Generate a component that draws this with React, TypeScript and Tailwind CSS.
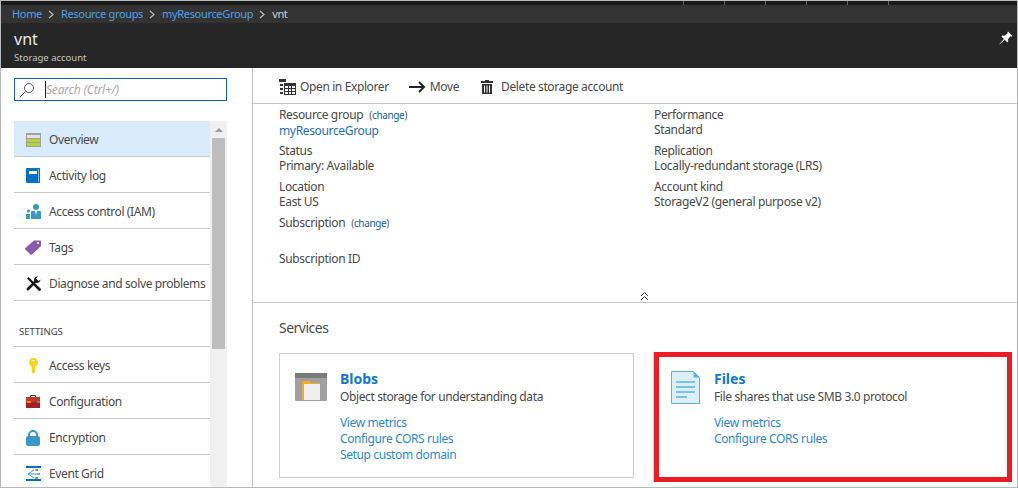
import React from "react";

const font = { fontFamily: '"Noto Sans", "Open Sans", sans-serif' };

const Overview = () => (
  <svg width="15" height="14" viewBox="0 0 15 14"><rect width="15" height="14" fill="#a0a0a0" /><rect x="1" y="2" width="13" height="3" fill="#e4e4e4" /><rect x="1" y="6" width="13" height="3" fill="#b8d432" /><rect x="1" y="10" width="13" height="3" fill="#b8d432" /></svg>
);
const ActivityLog = () => (
  <svg width="14" height="15" viewBox="0 0 14 15"><path d="M1 0h13v15H1a1 1 0 0 1-1-1V1a1 1 0 0 1 1-1z" fill="#0072c6" /><rect x="3" y="3" width="8" height="3" fill="#fff" /><rect x="12" y="1" width="1" height="13" fill="#7fb8e3" /></svg>
);
const Iam = () => (
  <svg width="15" height="15" viewBox="0 0 15 15"><circle cx="10" cy="3" r="3" fill="#3999c6" /><path d="M6 7h8a1 1 0 0 1 1 1v7H5V8a1 1 0 0 1 1-1z" fill="#3999c6" /><path d="M9 7h2l-1 4z" fill="#fff" /><circle cx="2.5" cy="7" r="1.6" fill="#3999c6" /><rect x="0" y="10" width="4" height="5" fill="#3999c6" /></svg>
);
const Tag = () => (
  <svg width="16" height="15" viewBox="0 0 16 15"><path d="M9 .5h6a1 1 0 0 1 1 1V6l-9 8.500a1 1 0 0 1-1.400 0L.4 9.500a1 1 0 0 1 0-1.400z" fill="#8a5ba8" /><circle cx="13" cy="3" r="1" fill="#fff" /></svg>
);
const Tools = () => (
  <svg width="15" height="15" viewBox="0 0 15 15" fill="#1a1a1a"><path d="M1 2.500 2.500 1l12 11.500a1 1 0 0 1-2 2z" /><path d="M14.500 3.500a3.500 3.500 0 0 1-4.500 3.300L3 14a1.300 1.300 0 0 1-2-2l7.200-7A3.500 3.500 0 0 1 12 .5L10 2.500 12.500 5z" /></svg>
);
const Key = () => (
  <svg width="9" height="16" viewBox="0 0 9 16"><path d="M4.500 0a4.500 4.500 0 0 1 1.800 8.600V14l-1.800 2-1.800-2V8.600A4.500 4.500 0 0 1 4.500 0z" fill="#fcd116" /><rect x="3" y="2" width="3" height="1.500" fill="#fff" opacity=".7" /></svg>
);
const Toolbox = () => (
  <svg width="14" height="13" viewBox="0 0 14 13"><path d="M4.500 2V.5h5V2" fill="none" stroke="#7a2a2a" /><rect y="2" width="14" height="5" fill="#c0392b" /><rect y="7" width="14" height="6" fill="#a32020" /><rect x="1" y="6" width="4" height="2" fill="#f08a24" /><rect x="11" y="6" width="3" height="2" fill="#7b6fb0" /></svg>
);
const Lock = () => (
  <svg width="14" height="16" viewBox="0 0 14 16"><path d="M3 7V5a4 4 0 0 1 8 0v2" fill="none" stroke="#3999c6" strokeWidth="2" /><rect y="6" width="14" height="10" rx="2" fill="#3999c6" /></svg>
);
const EventGrid = () => (
  <svg width="15" height="15" viewBox="0 0 15 15"><rect width="15" height="2" fill="#0072c6" /><rect y="13" width="15" height="2" fill="#0072c6" /><path d="M2 8 8 4M2 8h9M2 8l6 4" stroke="#3999c6" strokeWidth="1" fill="none" /><rect x="9" y="3" width="3" height="2" fill="#7fba00" /><rect x="11" y="7" width="3" height="2" fill="#59b4d9" /><rect x="9" y="11" width="3" height="2" fill="#7fba00" /></svg>
);
const Pin = () => (
  <svg width="14" height="14" viewBox="0 0 14 14" fill="#fff"><path d="M9 .5 13.500 5l-1 .6-1-.4L9 8.200l.3 2.300-1 1-2.600-2.700L.5 13.500l-.2-.2L4.900 8 2.400 5.500l1-1 2.300.3L8.700 2.300 8.400 1.400z" /></svg>
);
const Explorer = () => (
  <svg width="17" height="16" viewBox="0 0 17 16" fill="#333"><rect x="0" y="0" width="7" height="3" /><rect x="1" y="5" width="3" height="2" /><rect x="1" y="9" width="3" height="2" /><rect x="1" y="13" width="3" height="2" /><path d="M5 4h12v12H5zM6 7v2h3V7zm4 0v2h2V7zm3 0v2h3V7zM6 10v2h3v-2zm4 0v2h2v-2zm3 0v2h3v-2zM6 13v2h3v-2zm4 0v2h2v-2zm3 0v2h3v-2z" fillRule="evenodd" /></svg>
);
const Arrow = () => (
  <svg width="17" height="12" viewBox="0 0 17 12" fill="none" stroke="#222" strokeWidth="2"><path d="M0 6h15M10 1l5 5-5 5" /></svg>
);
const Trash = () => (
  <svg width="12" height="14" viewBox="0 0 12 14" fill="#333"><path d="M4 0h4v1h4v2H0V1h4z" /><path d="M1 4h10v10H1zM3 5.500V12.500h1V5.500zm2.500 0V12.500h1V5.500zm2.500 0V12.500h1V5.500z" fillRule="evenodd" /></svg>
);
const Search = () => (
  <svg width="16" height="16" viewBox="0 0 16 16" fill="none" stroke="#555"><circle cx="10" cy="6" r="4.500" /><path d="M6.700 9.300 1 15" /></svg>
);
const Chevron = () => (
  <svg width="7" height="9" viewBox="0 0 7 9" fill="none" stroke="#bbb" strokeWidth="1.200"><path d="M1 1l4 3.500L1 8" /></svg>
);
const Collapse = () => (
  <svg width="9" height="10" viewBox="0 0 9 10" fill="none" stroke="#444"><path d="M1 5l3.500-3.500L8 5M1 9l3.500-3.500L8 9" /></svg>
);
const Blobs = () => (
  <svg width="32" height="28" viewBox="0 0 32 28"><path d="M1 0h30a1 1 0 0 1 1 1v26a1 1 0 0 1-1 1H1a1 1 0 0 1-1-1V1a1 1 0 0 1 1-1z" fill="#a0a0a0" /><rect width="32" height="5" fill="#7a7a7a" /><path d="M7 8h8l1 2h9v17H7z" fill="#f9a825" /><rect x="9" y="11" width="16" height="16" fill="#efefef" /></svg>
);
const Files = () => (
  <svg width="29" height="33" viewBox="0 0 29 33"><path d="M.5.500h22l6 6v26H.5z" fill="#dceff8" stroke="#59b4d9" /><path d="M22.500.500v6h6z" fill="#59b4d9" /><path d="M5 11h19M5 16h19M5 21h19M5 26h11" stroke="#59b4d9" strokeWidth="1.300" /></svg>
);

const top = [
  ["Overview", <Overview />, true],
  ["Activity log", <ActivityLog />],
  ["Access control (IAM)", <Iam />],
  ["Tags", <Tag />],
  ["Diagnose and solve problems", <Tools />],
] as const;
const settings = [
  ["Access keys", <Key />],
  ["Configuration", <Toolbox />],
  ["Encryption", <Lock />],
  ["Event Grid", <EventGrid />],
] as const;

function Row({ label, icon, active }: { label: string; icon: React.ReactNode; active?: boolean }) {
  return (
    <div className={`flex h-9 shrink-0 items-center border-b border-[#c8c8c8] pt-[2px] ${active ? "bg-[#d9ebfb]" : ""}`}>
      <span className="flex w-[35px] shrink-0 justify-center pl-[3px]">{icon}</span>
      <span className="whitespace-nowrap text-[12px] tracking-[-0.38px] text-[#4a4a4a]">{label}</span>
    </div>
  );
}

function Field({ label, value, change }: { label: string; value?: string; change?: boolean }) {
  return (
    <div className="mb-[6px] h-[30px] text-[12px] leading-[15px] tracking-[-0.35px] text-[#4a4a4a]">
      <div>
        {label}
        {change && (
          <span className="ml-[6px] text-[10px] text-[#555]">
            (<span className="text-[#0f5fb0]">change</span>)
          </span>
        )}
      </div>
      <div className={value === "myResourceGroup" ? "text-[#1f6fc0]" : ""}>{value}</div>
    </div>
  );
}

function Card({ title, desc, links, icon, className }: { title: string; desc: string; links: string[]; icon: React.ReactNode; className: string }) {
  return (
    <div className={`flex ${className}`}>
      <div>{icon}</div>
      <div className="min-w-0">
        <div className="text-[14px] font-bold leading-[18px] text-[#0f78d4]">{title}</div>
        <div className="mb-[10px] text-[12px] leading-[17px] tracking-[-0.38px] text-[#4a4a4a]">{desc}</div>
        {links.map((l) => (
          <div key={l} className="text-[12px] leading-4 tracking-[-0.38px] text-[#2b88d8]">{l}</div>
        ))}
      </div>
    </div>
  );
}

export default function App() {
  return (
    <div style={font} className="flex h-[488px] w-[1018px] flex-col overflow-hidden border-t border-r border-b border-l border-[#b9b9b9] bg-white">
      <div className="flex h-[4px] shrink-0 justify-start bg-[#1a1a1a] pl-[682px]">
        {[0, 1, 2, 3, 4, 5].map((i) => (
          <span key={i} className="mr-[40px] h-full w-px bg-[#666]" />
        ))}
      </div>
      <div className="flex h-[18px] shrink-0 items-center gap-[6px] bg-[#333] pl-[11px] text-[11px] tracking-[-0.33px] text-[#4ea1e6]">
        <span>Home</span>
        <Chevron />
        <span>Resource groups</span>
        <Chevron />
        <span>myResourceGroup</span>
        <Chevron />
        <span className="text-[#cfcfcf]">vnt</span>
      </div>
      <div className="flex h-[45px] shrink-0 items-start justify-between bg-[#262626] pl-[13px] pr-[4px]">
        <div>
          <div className="text-[16px] leading-[22px] pt-[5px] text-[#e8e8e8]">vnt</div>
          <div className="text-[9.500px] leading-[14px] pt-[1px] text-[#c4c4c4]">Storage account</div>
        </div>
        <div className="pt-[8px]"><Pin /></div>
      </div>

      <div className="flex min-h-0 flex-1">
        <aside className="flex w-[252px] shrink-0 flex-col overflow-hidden border-r border-[#c4c4c4] pl-[13px] pr-[25px]">
          <div className="mt-[10px] flex h-[23px] w-[213px] shrink-0 items-center border border-[#0f5fb0] pl-[4px]">
            <Search />
            <span className="ml-[10px] h-[17px] w-px bg-[#222]" />
            <span className="text-[12px] italic tracking-[-0.2px] text-[#aaa]">Search (Ctrl+/)</span>
          </div>
          <div className="mt-[20px] flex min-h-0 flex-1 w-[213px]">
            <div className="w-[196px] shrink-0">
              {top.map(([l, ic, a]) => <Row key={l as string} label={l as string} icon={ic} active={!!a} />)}
              <div className="flex h-[46px] items-end border-b border-[#c8c8c8] pb-[7px] pl-[5px] text-[9.500px] leading-[14px] text-[#444]">SETTINGS</div>
              {settings.map(([l, ic]) => <Row key={l as string} label={l as string} icon={ic} />)}
            </div>
            <div className="flex w-[17px] shrink-0 flex-col items-center bg-[#f0f0f0]">
              <div className="mt-[7px] h-0 w-0 border-x-[4px] border-b-[4px] border-x-transparent border-b-[#999]" />
              <div className="mt-[6px] h-[211px] w-[13px] bg-[#bdbdbd]" />
            </div>
          </div>
        </aside>

        <main className="flex min-w-0 flex-1 flex-col">
          <div className="flex h-[36px] shrink-0 items-center border-b border-[#c4c4c4] pl-[26px] pt-[2px] text-[12px] tracking-[-0.38px] text-[#4a4a4a]">
            <Explorer />
            <span className="ml-[4px]">Open in Explorer</span>
            <span className="ml-[20px]"><Arrow /></span>
            <span className="ml-[4px]">Move</span>
            <span className="ml-[22px]"><Trash /></span>
            <span className="ml-[8px]">Delete storage account</span>
          </div>
          <div className="relative h-[199px] shrink-0 border-b border-[#c4c4c4] pt-[3px] pl-[26px]">
            <div className="grid grid-cols-[375px_1fr]">
              <div>
                <Field label="Resource group" value="myResourceGroup" change />
                <Field label="Status" value="Primary: Available" />
                <Field label="Location" value="East US" />
                <Field label="Subscription" change />
                <Field label="Subscription ID" />
              </div>
              <div>
                <Field label="Performance" value="Standard" />
                <Field label="Replication" value="Locally-redundant storage (LRS)" />
                <Field label="Account kind" value="StorageV2 (general purpose v2)" />
              </div>
            </div>
            <div className="absolute bottom-[1px] left-[387px]"><Collapse /></div>
          </div>
          <div className="flex-1 pl-[26px]">
            <div className="pt-[16px] text-[14px] leading-[18px] tracking-[-0.5px] text-[#4a4a4a]">Services</div>
            <div className="mt-[16px] flex items-start">
              <Card
                title="Blobs"
                desc="Object storage for understanding data"
                links={["View metrics", "Configure CORS rules", "Setup custom domain"]}
                icon={<div className="w-[45px] pt-[3px]"><Blobs /></div>}
                className="h-[125px] w-[355px] border border-[#d0d0d0] pl-[15px] pt-[16px]"
              />
              <Card
                title="Files"
                desc="File shares that use SMB 3.0 protocol"
                links={["View metrics", "Configure CORS rules"]}
                icon={<div className="w-[43px] pt-[1px]"><Files /></div>}
                className="ml-[20px] -mt-[1px] h-[130px] w-[358px] border-[5px] border-[#ed1c24] pl-[12px] pt-[13px] shadow-[-1px_0_0_#d0d0d0]"
              />
            </div>
          </div>
        </main>
      </div>
    </div>
  );
}
